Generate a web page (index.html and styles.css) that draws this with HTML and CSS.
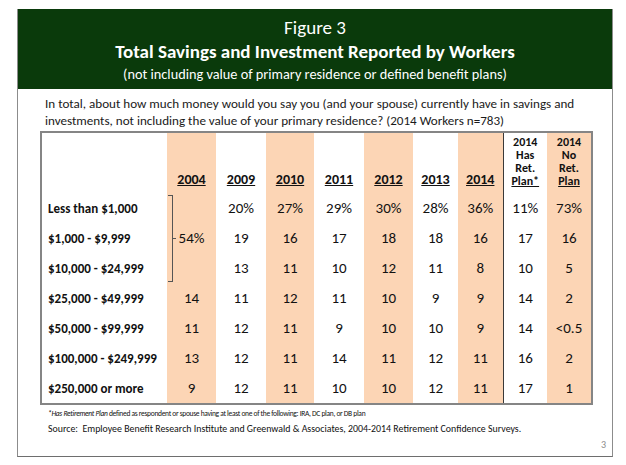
FILE: index.html
```html
<!DOCTYPE html>
<html lang="en">
<head>
<meta charset="utf-8">
<title>Figure 3</title>
<link rel="stylesheet" href="styles.css">
</head>
<body>
<div class="frame">
  <header class="banner">
    <div class="fig">Figure 3</div>
    <div class="title">Total Savings and Investment Reported by Workers</div>
    <div class="subtitle">(not including value of primary residence or defined benefit plans)</div>
  </header>
  <div class="panel">
    <p class="question">In total, about how much money would you say you (and your spouse) currently have in savings and investments, not including the value of your primary residence? (2014 Workers n=783)</p>
    <table class="data">
      <colgroup>
        <col class="c-label">
        <col class="c-a"><col class="c-b"><col class="c-c"><col class="c-d"><col class="c-e"><col class="c-f"><col class="c-g"><col class="c-h"><col class="c-i">
      </colgroup>
      <thead>
        <tr>
          <th class="lab"></th>
          <th class="sh"><u>2004</u></th>
          <th><u>2009</u></th>
          <th class="sh"><u>2010</u></th>
          <th><u>2011</u></th>
          <th class="sh"><u>2012</u></th>
          <th><u>2013</u></th>
          <th class="sh"><u>2014</u></th>
          <th class="small div">2014<br>Has<br>Ret.<br><u>Plan*</u></th>
          <th class="small sh">2014<br>No<br>Ret.<br><u>Plan</u></th>
        </tr>
      </thead>
      <tbody>
        <tr>
          <th class="lab">Less than $1,000</th>
          <td class="sh brk" rowspan="3"><span class="bracket"></span><span class="tick"></span>54%</td>
          <td>20%</td><td class="sh">27%</td><td>29%</td><td class="sh">30%</td><td>28%</td><td class="sh">36%</td><td class="div">11%</td><td class="sh">73%</td>
        </tr>
        <tr>
          <th class="lab">$1,000 - $9,999</th>
          <td>19</td><td class="sh">16</td><td>17</td><td class="sh">18</td><td>18</td><td class="sh">16</td><td class="div">17</td><td class="sh">16</td>
        </tr>
        <tr>
          <th class="lab">$10,000 - $24,999</th>
          <td>13</td><td class="sh">11</td><td>10</td><td class="sh">12</td><td>11</td><td class="sh">8</td><td class="div">10</td><td class="sh">5</td>
        </tr>
        <tr>
          <th class="lab">$25,000 - $49,999</th>
          <td class="sh">14</td><td>11</td><td class="sh">12</td><td>11</td><td class="sh">10</td><td>9</td><td class="sh">9</td><td class="div">14</td><td class="sh">2</td>
        </tr>
        <tr>
          <th class="lab">$50,000 - $99,999</th>
          <td class="sh">11</td><td>12</td><td class="sh">11</td><td>9</td><td class="sh">10</td><td>10</td><td class="sh">9</td><td class="div">14</td><td class="sh">&lt;0.5</td>
        </tr>
        <tr>
          <th class="lab">$100,000 - $249,999</th>
          <td class="sh">13</td><td>12</td><td class="sh">11</td><td>14</td><td class="sh">11</td><td>12</td><td class="sh">11</td><td class="div">16</td><td class="sh">2</td>
        </tr>
        <tr>
          <th class="lab">$250,000 or more</th>
          <td class="sh">9</td><td>12</td><td class="sh">11</td><td>10</td><td class="sh">10</td><td>12</td><td class="sh">11</td><td class="div">17</td><td class="sh">1</td>
        </tr>
      </tbody>
    </table>
    <p class="note"><span class="it">*Has Retirement Plan</span> defined as respondent or spouse having at least one of the following: IRA, DC plan, or DB plan</p>
    <p class="source">Source:&nbsp; Employee Benefit Research Institute and Greenwald &amp; Associates, 2004-2014 Retirement Confidence Surveys.</p>
    <div class="page">3</div>
  </div>
</div>
</body>
</html>
```
FILE: styles.css
```css
html, body {
  margin: 0;
  padding: 0;
  background: #ffffff;
}
body {
  font-family: "Carlito", "Lato", "Liberation Sans", sans-serif;
  color: #111;
}
.frame {
  margin: 9px 0 0 17px;
  width: 594px;
  border-left: 1px solid #8c8c8c;
  border-right: 1px solid #8c8c8c;
  border-bottom: 1px solid #6e6e6e;
}
.banner {
  background: #0a3a0b;
  color: #fff;
  text-align: center;
  height: 80px;
  box-sizing: border-box;
  padding-top: 7px;
}
.fig {
  font-size: 19px;
  line-height: 24px;
  font-weight: 300;
}
.title {
  font-size: 19px;
  font-weight: 700;
  line-height: 24px;
}
.subtitle {
  font-size: 14.3px;
  line-height: 21px;
}
.panel {
  position: relative;
  height: 367px;
  box-sizing: border-box;
  padding: 7px 0 0 22px;
}
.question {
  margin: 0 0 0 5px;
  font-size: 13.1px;
  line-height: 17px;
  color: #1a1a1a;
}
.data {
  margin-top: 1px;
  border-collapse: collapse;
  border: 2px solid #858585;
  width: 551px;
  table-layout: fixed;
}
.c-label { width: 126px; }
.c-a { width: 49px; }
.c-b { width: 50px; }
.c-c { width: 48px; }
.c-d { width: 50px; }
.c-e { width: 49px; }
.c-f { width: 45px; }
.c-g { width: 45px; }
.c-h { width: 44px; }
.c-i { width: 45px; }
.data th, .data td {
  padding: 0;
  text-align: center;
}
.data thead th {
  height: 55px;
  vertical-align: bottom;
  padding-bottom: 5px;
  font-size: 14px;
  font-weight: 700;
  line-height: 16px;
}
.data thead th.small {
  font-size: 12px;
  line-height: 13px;
}
.data tbody td, .data tbody th {
  height: 30px;
  font-size: 15px;
  vertical-align: middle;
}
.data tbody th.lab {
  text-align: left;
  padding-left: 6px;
  font-size: 13px;
  font-weight: 700;
  white-space: nowrap;
}
.sh {
  background: #fcd5b5;
}
.div {
  border-left: 1px solid #3a3a3a;
}
.brk {
  position: relative;
}
.bracket {
  position: absolute;
  left: 1px;
  top: 2px;
  width: 4px;
  height: 85px;
  border-top: 1px solid #555;
  border-right: 1px solid #555;
  border-bottom: 1px solid #555;
}
.tick {
  position: absolute;
  left: 5px;
  top: 45px;
  width: 4px;
  border-top: 1px solid #555;
}
.note {
  margin: 3px 0 0 8px;
  font-size: 7.5px;
  letter-spacing: -0.3px;
  line-height: 12px;
}
.it {
  font-style: italic;
}
.source {
  margin: 2px 0 0 8px;
  font-size: 9.9px;
  line-height: 14px;
}
.page {
  position: absolute;
  right: 6px;
  bottom: 5px;
  font-size: 10px;
  color: #8a8a8a;
}
```
